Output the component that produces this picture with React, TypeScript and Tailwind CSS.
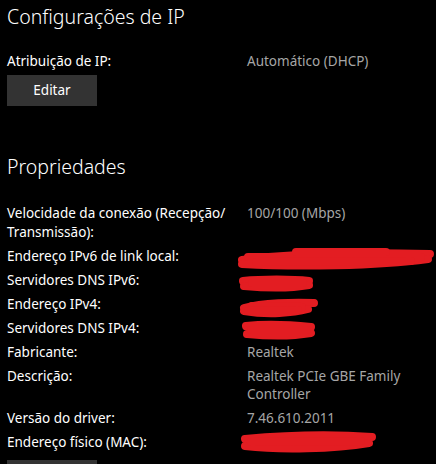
import type { ReactNode } from 'react';

type Row = { label: ReactNode; value?: ReactNode; scribble?: ReactNode };

// redaction scribbles drawn over the hidden values
const Scribble = ({ w, h, left, top, paths }: { w: number; h: number; left: number; top: number; paths: string[] }) => (
  <svg
    width={w}
    height={h}
    viewBox={`0 0 ${w} ${h}`}
    className="absolute pointer-events-none"
    style={{ left, top }}
  >
    {paths.map((d, i) => (
      <path key={i} d={d} fill="none" stroke="#e31d22" strokeWidth={8} strokeLinecap="round" strokeLinejoin="round" />
    ))}
  </svg>
);

const rows: Row[] = [
  {
    label: (
      <>
        Velocidade da conexão (Recepção/
        <br />
        Transmissão):
      </>
    ),
    value: '100/100 (Mbps)',
  },
  {
    label: 'Endereço IPv6 de link local:',
    scribble: (
      <Scribble
        w={200}
        h={26}
        left={-11}
        top={0}
        paths={[
          'M6 13 C50 7 120 5 194 7',
          'M6 17 C60 20 140 19 192 12',
          'M12 10 L185 10',
          'M20 15 L175 14',
          'M60 5 L150 5',
        ]}
      />
    ),
  },
  {
    label: 'Servidores DNS IPv6:',
    scribble: (
      <Scribble
        w={80}
        h={20}
        left={-10}
        top={3}
        paths={['M6 7 C25 5 55 5 72 7', 'M7 12 C30 14 55 14 72 11', 'M15 9 L66 9']}
      />
    ),
  },
  {
    label: 'Endereço IPv4:',
    scribble: (
      <Scribble
        w={82}
        h={22}
        left={-9}
        top={2}
        paths={['M6 11 C25 6 55 5 76 6', 'M6 14 C30 18 55 16 70 12', 'M14 9 L64 10', 'M10 14 L60 13']}
      />
    ),
  },
  {
    label: 'Servidores DNS IPv4:',
    scribble: (
      <Scribble
        w={76}
        h={22}
        left={-6}
        top={1}
        paths={['M5 6 C25 4 50 5 70 7', 'M6 14 C28 16 52 16 70 13', 'M10 10 L66 10']}
      />
    ),
  },
  { label: 'Fabricante:', value: 'Realtek' },
  {
    label: 'Descrição:',
    value: (
      <>
        Realtek PCIe GBE Family
        <br />
        Controller
      </>
    ),
  },
  { label: 'Versão do driver:', value: '7.46.610.2011' },
  {
    label: 'Endereço físico (MAC):',
    scribble: (
      <Scribble
        w={140}
        h={26}
        left={-8}
        top={-3}
        paths={['M6 9 C40 6 90 4 133 7', 'M6 16 C40 20 95 19 130 13', 'M12 12 L122 11']}
      />
    ),
  },
];

export default function App() {
  return (
    <div
      className="w-[436px] h-[464px] overflow-hidden bg-black text-white px-[7px]"
      style={{ fontFamily: '"Noto Sans", "Open Sans", sans-serif' }}
    >
      <h1 className="text-[19.5px] font-light leading-[28px] pt-[3px]">Configurações de IP</h1>

      <div className="mt-[21px] flex text-[13.5px] leading-[19px]">
        <div className="w-[240px] shrink-0">Atribuição de IP:</div>
        <div className="text-[#a6a6a6]">Automático (DHCP)</div>
      </div>
      <button className="mt-[4px] w-[90px] h-[31px] bg-[#333333] text-[13.5px] text-white">Editar</button>

      <h2 className="mt-[47px] text-[19.5px] font-light leading-[28px]">Propriedades</h2>

      <div className="mt-[23px] flex flex-col gap-[5.5px] text-[13.5px] leading-[18.5px]">
        {rows.map((row, i) => (
          <div key={i} className="flex">
            <div className="w-[240px] shrink-0">{row.label}</div>
            <div className="relative flex-1 text-[#a6a6a6]">
              {row.value}
              {row.scribble}
            </div>
          </div>
        ))}
      </div>
      <div className="mt-[8px] w-[90px] h-[31px] bg-[#333333]" />
    </div>
  );
}
